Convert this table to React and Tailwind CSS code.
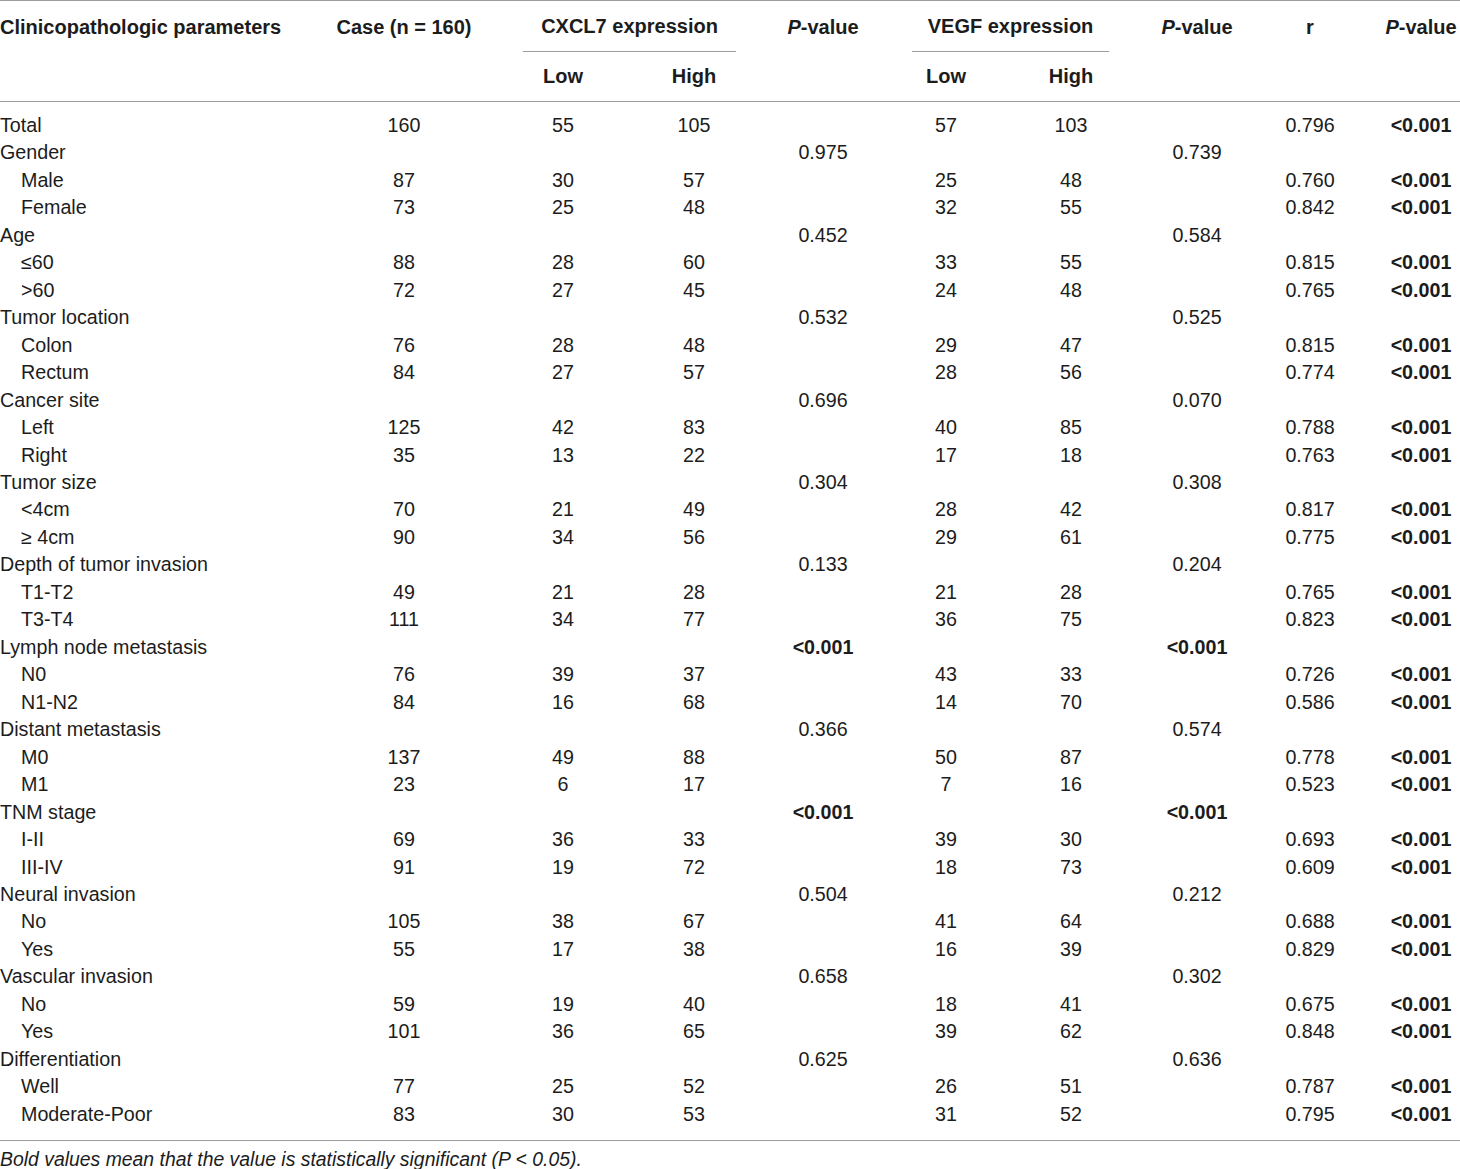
import React from 'react';

// label, indented, case, cxcl7 low, cxcl7 high, p1, vegf low, vegf high, p2, r, p3
const rows = [
  ['Total', false, '160', '55', '105', '', '57', '103', '', '0.796', '<0.001'],
  ['Gender', false, '', '', '', '0.975', '', '', '0.739', '', ''],
  ['Male', true, '87', '30', '57', '', '25', '48', '', '0.760', '<0.001'],
  ['Female', true, '73', '25', '48', '', '32', '55', '', '0.842', '<0.001'],
  ['Age', false, '', '', '', '0.452', '', '', '0.584', '', ''],
  ['≤60', true, '88', '28', '60', '', '33', '55', '', '0.815', '<0.001'],
  ['>60', true, '72', '27', '45', '', '24', '48', '', '0.765', '<0.001'],
  ['Tumor location', false, '', '', '', '0.532', '', '', '0.525', '', ''],
  ['Colon', true, '76', '28', '48', '', '29', '47', '', '0.815', '<0.001'],
  ['Rectum', true, '84', '27', '57', '', '28', '56', '', '0.774', '<0.001'],
  ['Cancer site', false, '', '', '', '0.696', '', '', '0.070', '', ''],
  ['Left', true, '125', '42', '83', '', '40', '85', '', '0.788', '<0.001'],
  ['Right', true, '35', '13', '22', '', '17', '18', '', '0.763', '<0.001'],
  ['Tumor size', false, '', '', '', '0.304', '', '', '0.308', '', ''],
  ['<4cm', true, '70', '21', '49', '', '28', '42', '', '0.817', '<0.001'],
  ['≥ 4cm', true, '90', '34', '56', '', '29', '61', '', '0.775', '<0.001'],
  ['Depth of tumor invasion', false, '', '', '', '0.133', '', '', '0.204', '', ''],
  ['T1-T2', true, '49', '21', '28', '', '21', '28', '', '0.765', '<0.001'],
  ['T3-T4', true, '111', '34', '77', '', '36', '75', '', '0.823', '<0.001'],
  ['Lymph node metastasis', false, '', '', '', '<0.001', '', '', '<0.001', '', ''],
  ['N0', true, '76', '39', '37', '', '43', '33', '', '0.726', '<0.001'],
  ['N1-N2', true, '84', '16', '68', '', '14', '70', '', '0.586', '<0.001'],
  ['Distant metastasis', false, '', '', '', '0.366', '', '', '0.574', '', ''],
  ['M0', true, '137', '49', '88', '', '50', '87', '', '0.778', '<0.001'],
  ['M1', true, '23', '6', '17', '', '7', '16', '', '0.523', '<0.001'],
  ['TNM stage', false, '', '', '', '<0.001', '', '', '<0.001', '', ''],
  ['I-II', true, '69', '36', '33', '', '39', '30', '', '0.693', '<0.001'],
  ['III-IV', true, '91', '19', '72', '', '18', '73', '', '0.609', '<0.001'],
  ['Neural invasion', false, '', '', '', '0.504', '', '', '0.212', '', ''],
  ['No', true, '105', '38', '67', '', '41', '64', '', '0.688', '<0.001'],
  ['Yes', true, '55', '17', '38', '', '16', '39', '', '0.829', '<0.001'],
  ['Vascular invasion', false, '', '', '', '0.658', '', '', '0.302', '', ''],
  ['No', true, '59', '19', '40', '', '18', '41', '', '0.675', '<0.001'],
  ['Yes', true, '101', '36', '65', '', '39', '62', '', '0.848', '<0.001'],
  ['Differentiation', false, '', '', '', '0.625', '', '', '0.636', '', ''],
  ['Well', true, '77', '25', '52', '', '26', '51', '', '0.787', '<0.001'],
  ['Moderate-Poor', true, '83', '30', '53', '', '31', '52', '', '0.795', '<0.001'],
];

const PValue = () => (
  <>
    <span className="italic">P</span>-value
  </>
);

const Cell = ({ value }) => (
  <td className={`p-0 text-center ${value.startsWith('<') ? 'font-bold' : ''}`}>{value}</td>
);

export default function App() {
  return (
    <div className="w-[1460px] bg-white text-[#1c1c1c] font-['Liberation_Sans',Arial,sans-serif]">
      <table className="w-[1460px] table-fixed border-collapse text-[19.7px] leading-none">
        <colgroup>
          <col className="w-[330px]" />
          <col className="w-[148px]" />
          <col className="w-[170px]" />
          <col className="w-[92px]" />
          <col className="w-[166px]" />
          <col className="w-[80px]" />
          <col className="w-[170px]" />
          <col className="w-[82px]" />
          <col className="w-[144px]" />
          <col className="w-[78px]" />
        </colgroup>
        <thead className="font-bold text-[20px]">
          <tr className="h-[51px] border-t border-[#9c9c9c] align-middle">
            <th className="p-0 text-left">Clinicopathologic parameters</th>
            <th className="p-0 text-center">Case (n = 160)</th>
            <th colSpan={2} className="p-0 h-[51px]">
              <div className="ml-[45px] mr-[4px] flex h-[51px] items-center justify-center border-b border-[#9c9c9c]">
                CXCL7 expression
              </div>
            </th>
            <th className="p-0 text-center">
              <PValue />
            </th>
            <th colSpan={2} className="p-0 h-[51px]">
              <div className="ml-[6px] mr-[47px] flex h-[51px] items-center justify-center border-b border-[#9c9c9c]">
                VEGF expression
              </div>
            </th>
            <th className="p-0 text-center">
              <PValue />
            </th>
            <th className="p-0 text-center">r</th>
            <th className="p-0 text-center">
              <PValue />
            </th>
          </tr>
          <tr className="h-[49px] border-b border-[#9c9c9c]">
            <th className="p-0" />
            <th className="p-0" />
            <th className="p-0 text-center">Low</th>
            <th className="p-0 text-center">High</th>
            <th className="p-0" />
            <th className="p-0 text-center">Low</th>
            <th className="p-0 text-center">High</th>
            <th className="p-0" />
            <th className="p-0" />
            <th className="p-0" />
          </tr>
        </thead>
        <tbody>
          <tr className="h-[11px]">
            <td colSpan={10} className="p-0" />
          </tr>
          {rows.map((row, i) => (
            <tr key={i} className="h-[27.47px]">
              <td className={`p-0 text-left ${row[1] ? 'pl-[21px]' : ''}`}>{row[0]}</td>
              {row.slice(2).map((v, j) => (
                <Cell key={j} value={v} />
              ))}
            </tr>
          ))}
          <tr className="h-[12px] border-b border-[#9c9c9c]">
            <td colSpan={10} className="p-0" />
          </tr>
        </tbody>
      </table>
      <p className="pt-[9px] text-[19.4px] italic leading-none">
        Bold values mean that the value is statistically significant (P &lt; 0.05).
      </p>
    </div>
  );
}
